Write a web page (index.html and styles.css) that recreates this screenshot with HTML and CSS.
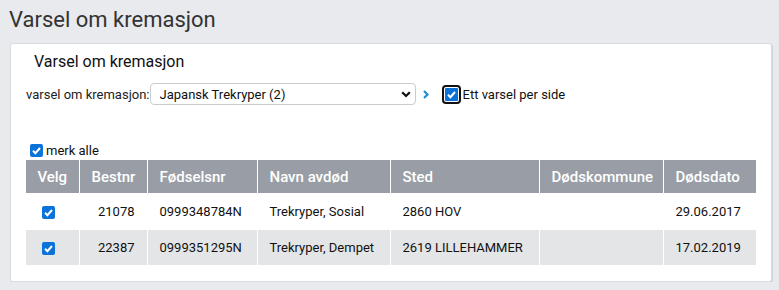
FILE: index.html
```html
<!DOCTYPE html>
<html lang="no">
<head>
    <meta charset="UTF-8">
    <title>Varsel om kremasjon</title>
    <link rel="stylesheet" href="styles.css">
</head>
<body>
    <h1 class="page-title">Varsel om kremasjon</h1>
    <div class="panel">
        <h2 class="panel-title">Varsel om kremasjon</h2>
        <div class="filter-row">
            <label for="varsel">varsel om kremasjon:</label>
            <div class="select-wrap">
                <select id="varsel">
                    <option>Japansk Trekryper (2)</option>
                </select>
                <svg class="select-arrow" width="10" height="7" viewBox="0 0 10 7"><path d="M1.2 1.2 L5 5 L8.8 1.2" fill="none" stroke="#111" stroke-width="2.2"/></svg>
            </div>
            <svg class="go-arrow" width="6" height="9" viewBox="0 0 6 9"><path d="M1 1 L4.5 4.5 L1 8" fill="none" stroke="#1e8fd6" stroke-width="2.2"/></svg>
            <label class="check focused"><span class="box"></span>Ett varsel per side</label>
        </div>
        <label class="check merk"><span class="box"></span>merk alle</label>
        <table class="grid">
            <colgroup>
                <col class="w-velg">
                <col class="w-nr">
                <col class="w-fnr">
                <col class="w-navn">
                <col class="w-sted">
                <col class="w-kom">
                <col>
            </colgroup>
            <thead>
                <tr>
                    <th class="c-velg">Velg</th>
                    <th>Bestnr</th>
                    <th>Fødselsnr</th>
                    <th>Navn avdød</th>
                    <th>Sted</th>
                    <th>Dødskommune</th>
                    <th>Dødsdato</th>
                </tr>
            </thead>
            <tbody>
                <tr>
                    <td class="c-velg"><span class="box"></span></td>
                    <td class="num">21078</td>
                    <td>0999348784N</td>
                    <td>Trekryper, Sosial</td>
                    <td>2860 HOV</td>
                    <td></td>
                    <td>29.06.2017</td>
                </tr>
                <tr>
                    <td class="c-velg"><span class="box"></span></td>
                    <td class="num">22387</td>
                    <td>0999351295N</td>
                    <td>Trekryper, Dempet</td>
                    <td>2619 LILLEHAMMER</td>
                    <td></td>
                    <td>17.02.2019</td>
                </tr>
            </tbody>
        </table>
    </div>
</body>
</html>
```

FILE: styles.css
```css
body {
    margin: 0;
    padding: 0 7px 0 10px;
    background: #e8eaed;
    font-family: Roboto, "Liberation Sans", Arial, sans-serif;
    color: #222;
}
.page-title {
    margin: 0 0 0 -1px;
    padding-top: 7px;
    height: 36px;
    font-size: 22px;
    line-height: 26px;
    font-weight: 400;
    color: #333;
}
.panel {
    background: #fff;
    border: 1px solid #d8dbe0;
    border-radius: 3px;
    box-shadow: 1px 1px 1px #d0d3d8;
    height: 239px;
    box-sizing: border-box;
    padding: 0 15px;
}
.panel-title {
    margin: 0;
    padding: 8px 0 0 8px;
    height: 19px;
    font-size: 16px;
    line-height: 19px;
    font-weight: 400;
    color: #111;
}
.filter-row {
    display: flex;
    align-items: center;
    height: 22px;
    margin-top: 12px;
    font-size: 13px;
}
.select-wrap {
    position: relative;
    height: 22px;
}
.select-wrap select {
    appearance: none;
    width: 266px;
    height: 22px;
    border: 1px solid #ccc;
    border-radius: 4px;
    background: #fff;
    font-family: inherit;
    font-size: 13px;
    color: #111;
    padding: 0 0 0 9px;
}
.select-arrow {
    position: absolute;
    right: 5px;
    top: 8px;
}
.go-arrow {
    margin-left: 7px;
}
.check {
    display: flex;
    align-items: center;
    font-size: 13px;
    color: #111;
}
.box {
    display: inline-block;
    width: 13px;
    height: 13px;
    border-radius: 2px;
    background: #0b72d9 url("data:image/svg+xml,%3Csvg xmlns='http://www.w3.org/2000/svg' viewBox='0 0 13 13'%3E%3Cpath d='M3 6.8 L5.4 9.2 L10 4' fill='none' stroke='white' stroke-width='2'/%3E%3C/svg%3E") center/13px no-repeat;
}
.check.focused {
    margin-left: 16px;
}
.check.focused .box {
    outline: 2px solid #111;
    outline-offset: 1px;
    border-radius: 1px;
    margin-right: 5px;
}
.merk {
    margin: 37px 0 0 4px;
    height: 16px;
}
.merk .box {
    margin-right: 3px;
}
.grid {
    border-collapse: collapse;
    table-layout: fixed;
    width: 730px;
    font-size: 13px;
    margin-top: 2px;
}
.w-velg { width: 53px; }
.w-nr { width: 68px; }
.w-fnr { width: 110px; }
.w-navn { width: 133px; }
.w-sted { width: 149px; }
.w-kom { width: 124px; }
.grid th {
    background: #999ea6;
    color: #fff;
    font-size: 15px;
    font-weight: 500;
    text-align: left;
    height: 33px;
    padding: 0 0 0 12px;
    border-left: 1px solid #fff;
}
.grid td {
    height: 37px;
    padding: 0 0 0 12px;
    border-left: 1px solid #fff;
    color: #111;
}
.grid th:first-child,
.grid td:first-child {
    border-left: none;
}
.grid th.c-velg {
    text-align: center;
    padding: 0;
}
.grid td.c-velg {
    padding: 0 0 0 16px;
}
.grid td.c-velg .box {
    vertical-align: middle;
}
.grid tbody tr:nth-child(2) td {
    height: 35px;
    background: #e4e5e7;
}
.grid td.num {
    text-align: right;
    padding: 0 12px 0 0;
}
```
